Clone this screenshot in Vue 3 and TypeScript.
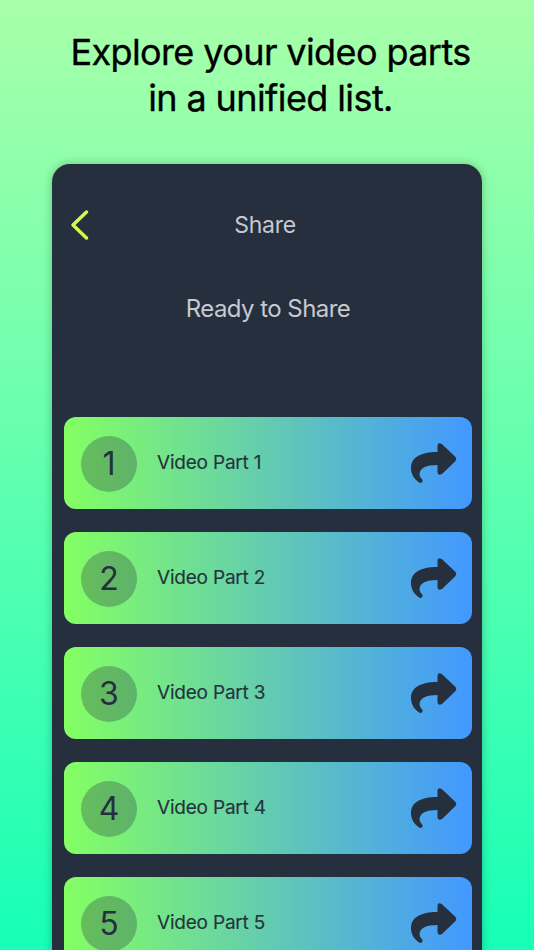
<script setup lang="ts">
const parts: number[] = [1, 2, 3, 4, 5]
</script>

<template>
  <main class="page">
    <h1 class="title">Explore your video parts<br />in a unified list.</h1>
    <section class="card">
      <header class="bar">
        <svg class="back" width="20" height="32" viewBox="0 0 20 32" aria-hidden="true">
          <path d="M16.500 3 L3 16 L16.500 29" fill="none" stroke="currentColor" stroke-width="3.5" stroke-linecap="round" stroke-linejoin="round" />
        </svg>
        <span class="bar-title">Share</span>
      </header>
      <h2 class="ready">Ready to Share</h2>
      <ul class="list">
        <li v-for="n in parts" :key="n" class="row">
          <span class="num">{{ n }}</span>
          <span class="label">Video Part {{ n }}</span>
          <svg class="share" width="46" height="41" viewBox="0 0 46 41" aria-hidden="true">
            <path d="M44 13.500 L31 1.200 Q26.500 -1.500 26.500 3 V9 C9 9 0 15 0 25 C0 31 3 36 8 39.500 Q12 41 11.500 37 C10 35 8.500 33.500 8.500 31 C9 25 15 22 26.500 22 V29 Q26.500 33 31 31 L44 18.500 Q46.500 16 44 13.500 Z" fill="currentColor" />
          </svg>
        </li>
      </ul>
    </section>
  </main>
</template>

<style>
html, body { margin: 0; padding: 0; }
</style>

<style scoped>
.page {
  box-sizing: border-box;
  width: 534px;
  height: 950px;
  overflow: hidden;
  padding-top: 29px;
  background: linear-gradient(180deg, #a9ffa9 0%, #17ffb7 100%);
  font-family: Inter, "Liberation Sans", sans-serif;
  display: flex;
  flex-direction: column;
  align-items: center;
}
.title {
  margin: 0;
  padding-left: 7px;
  font-size: 36px;
  line-height: 46px;
  font-weight: 400;
  letter-spacing: -0.6px;
  text-align: center;
  color: #000;
  -webkit-text-stroke: 0.35px #000;
}
.card {
  box-sizing: border-box;
  flex: none;
  width: 430px;
  margin-top: 43px;
  padding: 0 10px 0 12px;
  border-radius: 18px;
  background: #252f3e;
  box-shadow: 0 0 10px rgba(0, 0, 0, 0.25);
}
.bar {
  position: relative;
  height: 122px;
  display: flex;
  align-items: center;
  justify-content: center;
  padding-right: 6px;
  box-sizing: border-box;
}
.back {
  position: absolute;
  left: 6px;
  top: 45px;
  color: #d3f94d;
}
.bar-title {
  font-size: 23px;
  color: #c6c9d0;
  letter-spacing: -0.25px;
}
.ready {
  margin: 0;
  height: 131px;
  font-size: 24px;
  line-height: 46px;
  font-weight: 400;
  letter-spacing: -0.55px;
  text-align: center;
  color: #c6c9d0;
}
.list {
  list-style: none;
  margin: 0;
  padding: 0;
  display: flex;
  flex-direction: column;
  gap: 23px;
}
.row {
  height: 92px;
  display: flex;
  align-items: center;
  padding: 0 15px 0 17px;
  border-radius: 12px;
  background: linear-gradient(90deg, #84ff62 0%, #4298ff 100%);
  color: #253340;
}
.num {
  flex: none;
  box-sizing: border-box;
  width: 56px;
  height: 56px;
  margin-top: 2px;
  padding-bottom: 2px;
  border-radius: 50%;
  display: flex;
  align-items: center;
  justify-content: center;
  background: rgba(37, 47, 62, 0.3);
  font-size: 32px;
  color: #252f3e;
}
.label {
  flex: 1;
  margin: 0 0 2px 20px;
  font-size: 19px;
  letter-spacing: -0.2px;
  -webkit-text-stroke: 0.15px #253340;
}
.share {
  flex: none;
  color: #252f3e;
}
</style>
